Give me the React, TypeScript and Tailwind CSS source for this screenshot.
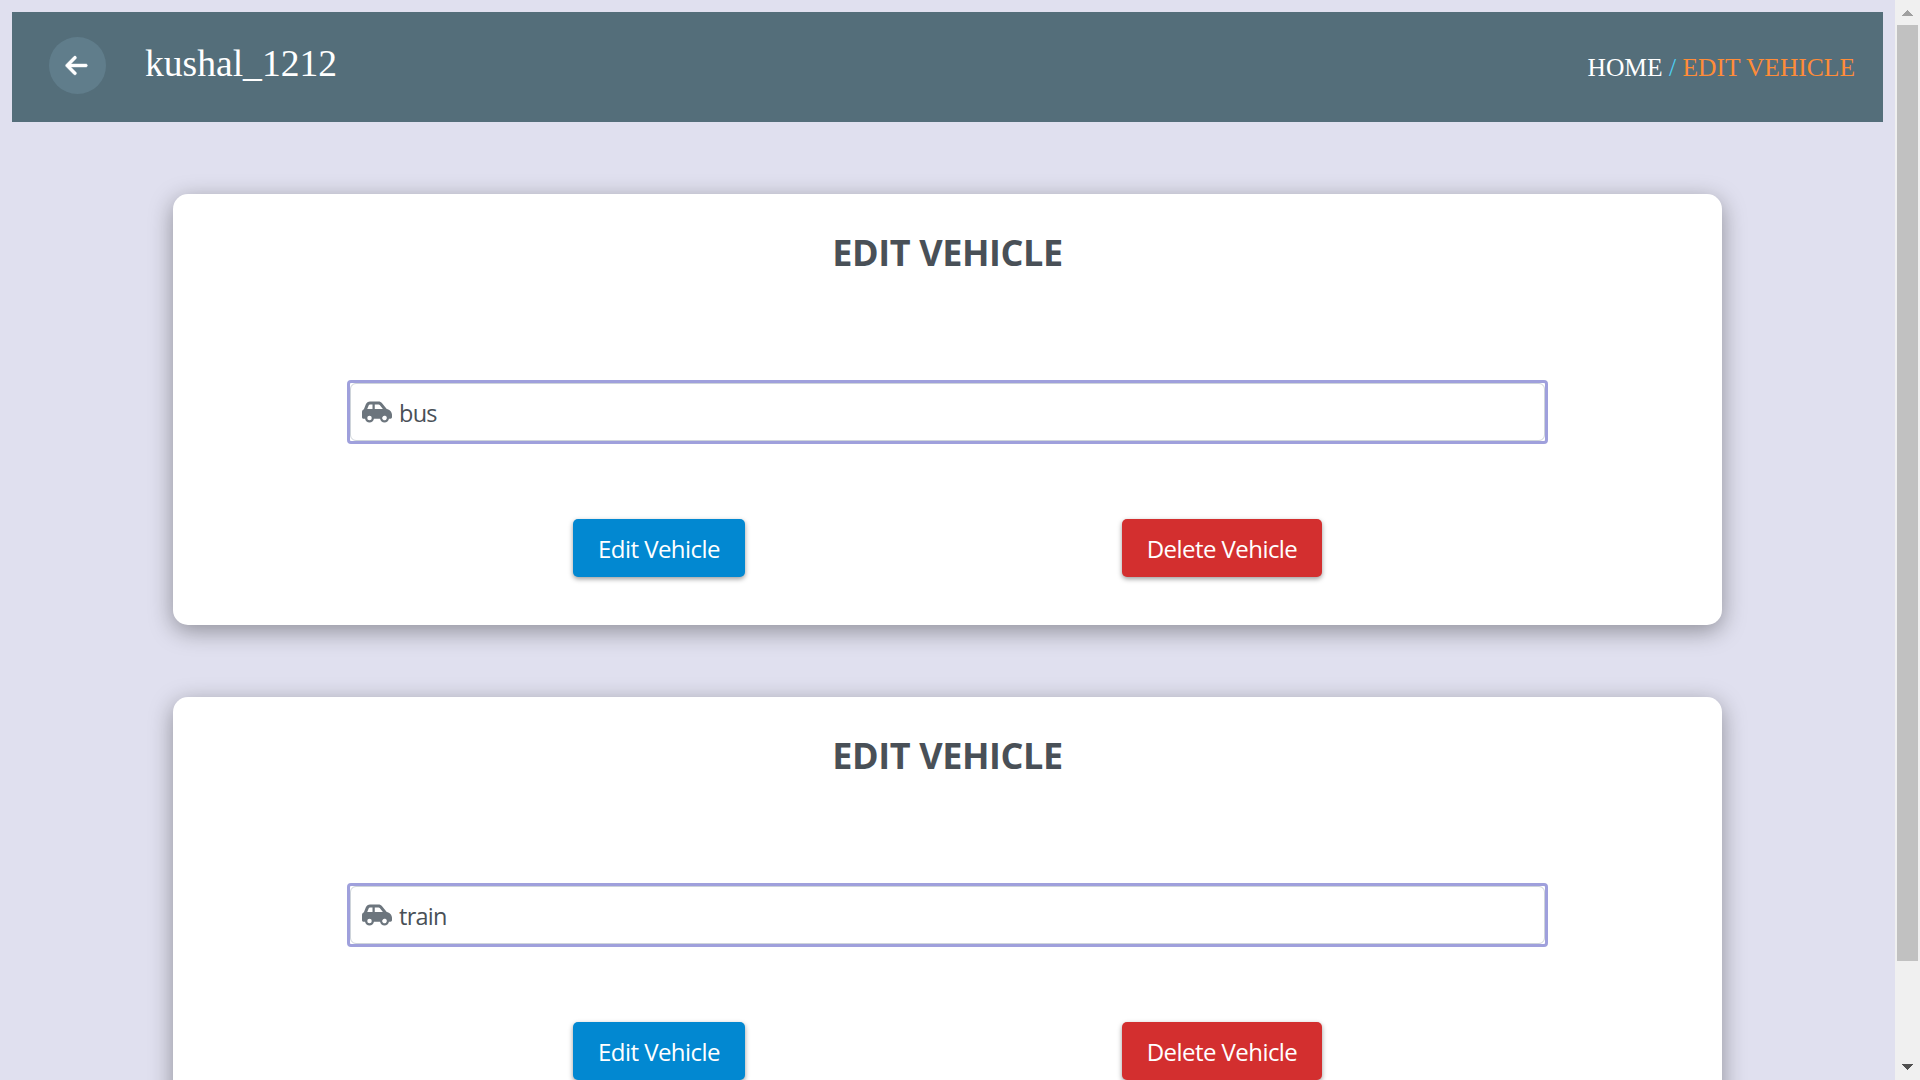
import { FaArrowLeft, FaCarSide } from "react-icons/fa6";

const vehicles = ["bus", "train"];

function Header() {
  return (
    <header className="flex h-[110px] shrink-0 justify-between bg-[#546e7a] pl-[37px] pr-7 font-['Liberation_Serif',serif] text-white">
      <div className="flex items-start">
        <button className="mt-[25px] flex size-[57px] items-center justify-center rounded-full bg-[#607d8b]">
          <FaArrowLeft size={25} className="mr-[3px] stroke-white stroke-[8]" />
        </button>
        <h1 className="ml-[39px] mt-[30px] text-[37.6px] leading-[44px]">kushal_1212</h1>
      </div>
      <nav className="mt-[41px] text-[25.5px] leading-[30px]">
        HOME <span className="text-[#4dd0f5]">/</span> <span className="text-[#ff8c38]">EDIT VEHICLE</span>
      </nav>
    </header>
  );
}

function VehicleCard({ name }: { name: string }) {
  return (
    <section className="mx-[161px] mt-[72px] h-[431px] shrink-0 rounded-[15px] bg-white pt-[35px] shadow-[0_6px_23px_rgba(0,0,0,0.37)]">
      <h2 className="text-center text-[36px] font-bold leading-[48px] tracking-[-0.4px] text-[#495057]">
        EDIT VEHICLE
      </h2>
      <div className="mx-[174px] mt-[103px] rounded-[4px] border-3 border-[#9fa0dc]">
        <div className="flex h-[58px] items-center rounded-[6px] border border-[#ced4da] pl-[11px]">
          <FaCarSide className="h-6 w-[30px] text-[#6c757d]" />
          <span className="ml-[7px] mt-px text-[23.5px] leading-8 tracking-[-0.75px] text-[#495057]">{name}</span>
        </div>
      </div>
      <div className="mt-[75px] flex pl-[400px] text-[24px] tracking-[-0.55px] text-white">
        <button className="h-[58px] w-[172px] rounded-[5px] bg-[#0288d1] pt-px shadow-[0_2px_5px_rgba(0,0,0,0.4)]">
          Edit Vehicle
        </button>
        <button className="ml-[377px] h-[58px] w-[200px] rounded-[5px] bg-[#d32f2f] pt-px shadow-[0_2px_5px_rgba(0,0,0,0.4)]">
          Delete Vehicle
        </button>
      </div>
    </section>
  );
}

function Scrollbar() {
  return (
    <aside className="flex w-[25px] shrink-0 flex-col items-center bg-[#f0f0f0]">
      <svg className="h-[25px] w-[25px] shrink-0" viewBox="0 0 25 25" shapeRendering="crispEdges">
        <path d="M7 16L12.5 10L18 16Z" fill="#a0a0a0" />
      </svg>
      <div className="h-[936px] w-[21px] bg-[#c1c1c1]" />
      <svg className="mt-auto h-[25px] w-[25px] shrink-0" viewBox="0 0 25 25" shapeRendering="crispEdges">
        <path d="M7 9L12.5 15L18 9Z" fill="#505050" />
      </svg>
    </aside>
  );
}

export default function App() {
  return (
    <div className="flex h-screen overflow-hidden bg-[#e0e0ef] font-['Open_Sans',sans-serif]">
      <main className="flex flex-1 flex-col overflow-hidden p-3">
        <Header />
        {vehicles.map((name) => (
          <VehicleCard key={name} name={name} />
        ))}
      </main>
      <Scrollbar />
    </div>
  );
}
